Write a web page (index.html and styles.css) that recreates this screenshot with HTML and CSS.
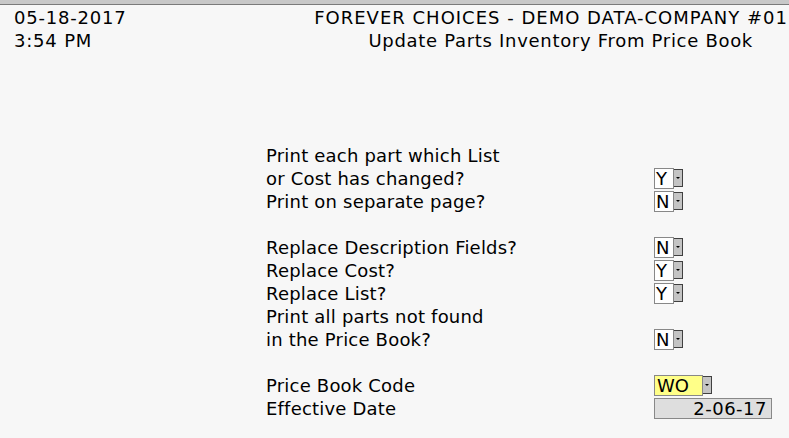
FILE: index.html
```html
<!DOCTYPE html>
<html>
<head>
    <title>Update Parts Inventory From Price Book</title>
    <link rel="stylesheet" href="styles.css">
</head>
<body>
    <div class="topbar"></div>

    <div class="screen">
        <div class="header">
            <div class="stamp">
                <div>05-18-2017</div>
                <div>3:54 PM</div>
            </div>
            <div class="titles">
                <div class="company">FOREVER CHOICES - DEMO DATA-COMPANY #01</div>
                <div class="subtitle">Update Parts Inventory From Price Book</div>
            </div>
        </div>

        <div class="form">
            <div class="row"><span>Print each part which List</span></div>
            <div class="row">
                <span>or Cost has changed?</span>
                <span class="combo"><span class="val">Y</span><span class="btn"></span></span>
            </div>
            <div class="row">
                <span>Print on separate page?</span>
                <span class="combo"><span class="val">N</span><span class="btn"></span></span>
            </div>
            <div class="row"></div>
            <div class="row">
                <span>Replace Description Fields?</span>
                <span class="combo"><span class="val">N</span><span class="btn"></span></span>
            </div>
            <div class="row">
                <span>Replace Cost?</span>
                <span class="combo"><span class="val">Y</span><span class="btn"></span></span>
            </div>
            <div class="row">
                <span>Replace List?</span>
                <span class="combo"><span class="val">Y</span><span class="btn"></span></span>
            </div>
            <div class="row"><span>Print all parts not found</span></div>
            <div class="row">
                <span>in the Price Book?</span>
                <span class="combo"><span class="val">N</span><span class="btn"></span></span>
            </div>
            <div class="row"></div>
            <div class="row">
                <span>Price Book Code</span>
                <span class="combo wide"><span class="val active">WO</span><span class="btn"></span></span>
            </div>
            <div class="row">
                <span>Effective Date</span>
                <span class="datebox">2-06-17</span>
            </div>
        </div>
    </div>
</body>
</html>
```

FILE: styles.css
```css
body {
    margin: 0;
    background-color: #f7f7f7;
    font-family: "DejaVu Sans", Verdana, sans-serif;
    font-size: 18px;
    color: #000;
    overflow: hidden;
}
.topbar {
    height: 4px;
    background-color: #c8c8c8;
    border-bottom: 1px solid #7a7a7a;
}
.screen {
    padding-top: 1px;
}
.header {
    display: flex;
    justify-content: space-between;
    line-height: 23px;
    height: 138px;
    letter-spacing: 0.8px;
}
.stamp {
    padding-left: 14px;
}
.titles {
    text-align: right;
    padding-right: 1px;
}
.company {
    letter-spacing: 1px;
}
.subtitle {
    letter-spacing: 0.7px;
    padding-right: 35px;
}
.form {
    padding-left: 266px;
    letter-spacing: 0.2px;
}
.row {
    display: flex;
    align-items: center;
    height: 23px;
    position: relative;
}
.combo {
    position: absolute;
    left: 388px;
    top: 1px;
    display: flex;
    align-items: flex-start;
    letter-spacing: 0;
}
.val {
    display: block;
    width: 17px;
    height: 19px;
    line-height: 19px;
    padding-left: 1px;
    background-color: #fff;
    border: 1px solid #888;
}
.btn {
    display: block;
    width: 8px;
    height: 16px;
    margin-top: 1px;
    background-color: #c4c4c4;
    border: 1px solid #404040;
    border-left: none;
    position: relative;
}
.btn::after {
    content: "";
    position: absolute;
    left: 2px;
    top: 7px;
    border-left: 2px solid transparent;
    border-right: 2px solid transparent;
    border-top: 2px solid #000;
}
.wide .val {
    width: 45px;
    padding-left: 2px;
}
.active {
    background-color: #ffff88 !important;
}
.datebox {
    position: absolute;
    left: 388px;
    top: 1px;
    width: 112px;
    height: 19px;
    line-height: 19px;
    padding-right: 4px;
    text-align: right;
    letter-spacing: 0.5px;
    background-color: #dedede;
    border: 1px solid #888;
}
```
